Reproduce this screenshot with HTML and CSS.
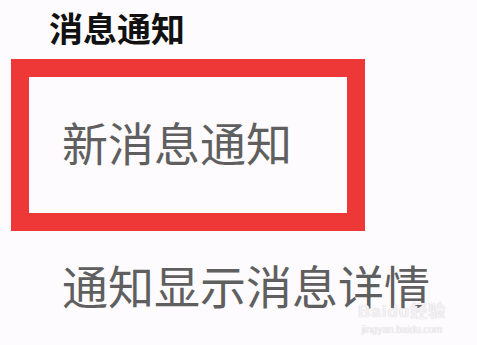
FILE: index.html
```html
<!DOCTYPE html>
<html lang="zh-CN">
<head>
    <meta charset="UTF-8">
    <meta name="viewport" content="width=device-width, initial-scale=1.0">
    <title>消息通知</title>
    <link rel="stylesheet" href="styles.css">
</head>
<body>
    <div class="page">
        <h2 class="section-title">消息通知</h2>
        <div class="setting-row highlight">
            <span class="setting-label">新消息通知</span>
        </div>
        <div class="setting-row">
            <span class="setting-label">通知显示消息详情</span>
        </div>
    </div>

    <div class="watermark">
        <div class="wm-brand">Baidu经验</div>
        <div class="wm-url">jingyan.baidu.com</div>
    </div>
</body>
</html>
```

FILE: styles.css
```css
body, html {
    margin: 0;
    padding: 0;
    width: 100%;
    height: 100%;
    overflow: hidden;
    background-color: #fdfbfd;
    font-family: "Noto Sans CJK SC", "Noto Sans", sans-serif;
}

.page {
    display: flex;
    flex-direction: column;
    padding-top: 8px;
}

.section-title {
    margin: 0 0 0 49px;
    font-size: 34px;
    line-height: 40px;
    font-weight: 700;
    color: #111;
}

.setting-row {
    display: flex;
    align-items: center;
    padding-left: 62px;
    height: 106px;
}

.setting-label {
    font-size: 46px;
    line-height: 56px;
    color: #5f5f5f;
    white-space: nowrap;
}

.setting-row.highlight {
    margin: 11px 0 0 11px;
    width: 285px;
    height: 136px;
    padding-left: 33px;
    border: 18px solid #ee3838;
    align-items: flex-start;
}

.setting-row.highlight .setting-label {
    margin-top: 36px;
}

/* Baidu watermark */
.watermark {
    position: absolute;
    left: 358px;
    top: 302px;
    display: flex;
    flex-direction: column;
    gap: 2px;
    font-family: "Liberation Sans", Arial, "Noto Sans CJK SC", sans-serif;
    color: #f4f2f4;
    text-shadow: 0 0 1px #c9c7c9;
    text-align: center;
}

.wm-brand {
    font-size: 17px;
    font-weight: 700;
    line-height: 20px;
    letter-spacing: 1px;
}

.wm-url {
    font-size: 10px;
    line-height: 12px;
}
```
